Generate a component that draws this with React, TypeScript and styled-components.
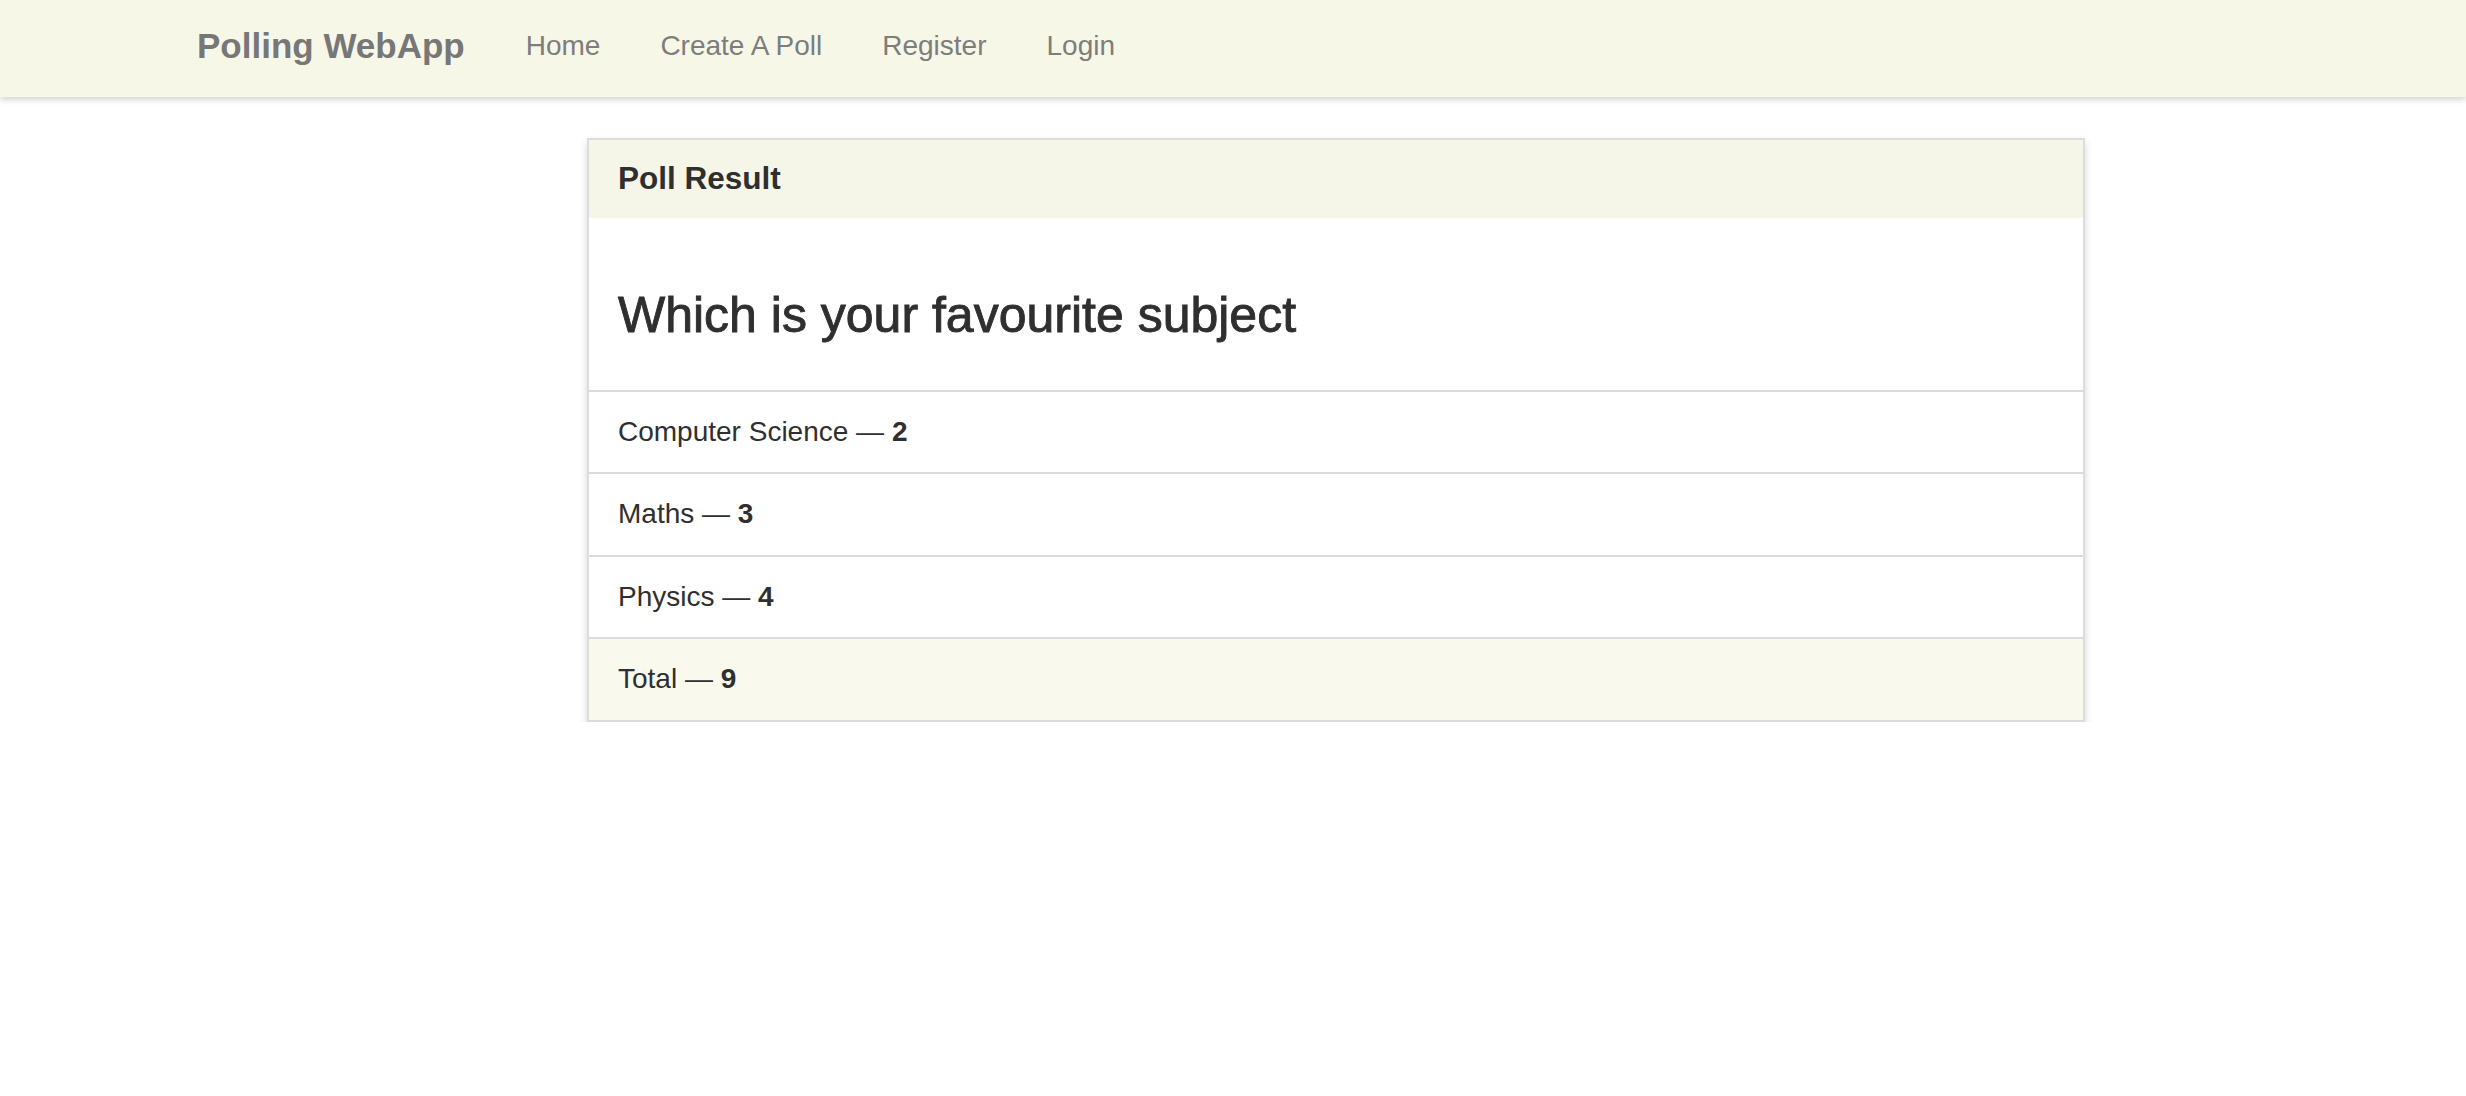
import React from "react";
import styled, { createGlobalStyle } from "styled-components";

const GlobalStyle = createGlobalStyle`
  html, body {
    margin: 0;
    padding: 0;
    background: #fff;
    font-family: "Liberation Sans", Arial, Helvetica, sans-serif;
    color: #2f2f2f;
  }
  * { box-sizing: border-box; }
`;

const results = [
  { name: "Computer Science", votes: 2 },
  { name: "Maths", votes: 3 },
  { name: "Physics", votes: 4 },
];

function App() {
  const total = results.reduce((sum, r) => sum + r.votes, 0);
  return (
    <>
      <GlobalStyle />
      <Navbar>
        <Brand href="#">Polling WebApp</Brand>
        <NavList>
          <NavLink href="#">Home</NavLink>
          <NavLink href="#">Create A Poll</NavLink>
          <NavLink href="#">Register</NavLink>
          <NavLink href="#">Login</NavLink>
        </NavList>
      </Navbar>
      <Main>
        <Card>
          <CardHeader>Poll Result</CardHeader>
          <CardBody>
            <Question>Which is your favourite subject</Question>
          </CardBody>
          <ResultList>
            {results.map((r) => (
              <ResultItem key={r.name}>
                {r.name} — <b>{r.votes}</b>
              </ResultItem>
            ))}
            <ResultItem $total>
              Total — <b>{total}</b>
            </ResultItem>
          </ResultList>
        </Card>
      </Main>
    </>
  );
}

export default App;

const Navbar = styled.nav`
  display: flex;
  align-items: center;
  height: 97px;
  padding: 0 0 6px 197px;
  background-color: #f7f7e8;
  box-shadow: 0 3px 6px rgba(0, 0, 0, 0.16);
  position: relative;
  z-index: 1;
`;

const Brand = styled.a`
  font-size: 35px;
  font-weight: 700;
  color: #777;
  text-decoration: none;
  margin-right: 61px;
`;

const NavList = styled.div`
  display: flex;
  gap: 60px;
`;

const NavLink = styled.a`
  font-size: 28px;
  color: #7d7d7d;
  text-decoration: none;
`;

const Main = styled.main`
  padding: 41px 0 0 587px;
`;

const Card = styled.section`
  width: 1498px;
  border: 2px solid #dcdcdc;
  box-shadow: 0 4px 8px rgba(0, 0, 0, 0.16);
  background: #fff;
`;

const CardHeader = styled.h5`
  margin: 0;
  padding: 20px 29px;
  background-color: #f6f6e8;
  font-size: 31.5px;
  font-weight: 700;
  line-height: 1.2;
  color: #2f2f2f;
`;

const CardBody = styled.div`
  padding: 67px 29px 45px;
  border-bottom: 2px solid #dcdcdc;
`;

const Question = styled.h3`
  margin: 0;
  font-size: 50px;
  font-weight: 400;
  line-height: 60px;
  color: #2f2f2f;
  -webkit-text-stroke: 0.9px #2f2f2f;
`;

const ResultList = styled.ul`
  list-style: none;
  margin: 0;
  padding: 0;
`;

const ResultItem = styled.li<{ $total?: boolean }>`
  padding: 20px 29px 20.5px;
  font-size: 28px;
  line-height: 40px;
  color: #2f2f2f;
  background-color: ${(p) => (p.$total ? "#f9f9ee" : "#fff")};
  border-bottom: 2px solid #dcdcdc;

  &:last-child {
    border-bottom: none;
  }

  b {
    font-weight: 700;
  }
`;
